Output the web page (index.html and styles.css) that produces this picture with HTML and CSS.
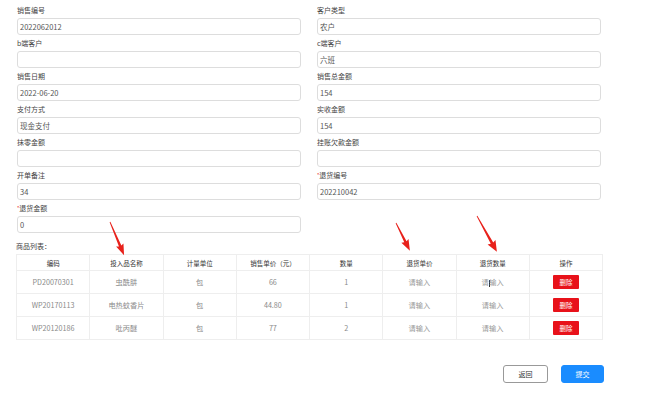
FILE: index.html
```html
<!DOCTYPE html>
<html lang="zh-CN">
<head>
<meta charset="utf-8">
<title>退货</title>
<link rel="stylesheet" href="styles.css">
</head>
<body>
<div class="page">
  <div class="form">
    <div class="field"><div class="label">销售编号</div><div class="input">2022062012</div></div>
    <div class="field"><div class="label">客户类型</div><div class="input">农户</div></div>
    <div class="field"><div class="label">b端客户</div><div class="input"></div></div>
    <div class="field"><div class="label">c端客户</div><div class="input">六班</div></div>
    <div class="field"><div class="label">销售日期</div><div class="input">2022-06-20</div></div>
    <div class="field"><div class="label">销售总金额</div><div class="input">154</div></div>
    <div class="field"><div class="label">支付方式</div><div class="input">现金支付</div></div>
    <div class="field"><div class="label">实收金额</div><div class="input">154</div></div>
    <div class="field"><div class="label">抹零金额</div><div class="input"></div></div>
    <div class="field"><div class="label">挂账欠款金额</div><div class="input"></div></div>
    <div class="field"><div class="label">开单备注</div><div class="input">34</div></div>
    <div class="field"><div class="label"><span class="req">*</span>退货编号</div><div class="input">202210042</div></div>
    <div class="field"><div class="label"><span class="req">*</span>退货金额</div><div class="input">0</div></div>
  </div>

  <div class="caption">商品列表：</div>
  <table class="goods">
    <thead>
      <tr><th>编码</th><th>投入品名称</th><th>计量单位</th><th>销售单价（元）</th><th>数量</th><th>退货单价</th><th>退货数量</th><th>操作</th></tr>
    </thead>
    <tbody>
      <tr><td>PD20070301</td><td>虫酰肼</td><td>包</td><td>66</td><td>1</td><td class="ph">请输入</td><td class="ph">请<span class="caret"></span>输入</td><td><span class="del">删除</span></td></tr>
      <tr><td>WP20170113</td><td>电热蚊香片</td><td>包</td><td>44.80</td><td>1</td><td class="ph">请输入</td><td class="ph">请输入</td><td><span class="del">删除</span></td></tr>
      <tr><td>WP20120186</td><td>吡丙醚</td><td>包</td><td>77</td><td>2</td><td class="ph">请输入</td><td class="ph">请输入</td><td><span class="del">删除</span></td></tr>
    </tbody>
  </table>

  <div class="actions">
    <span class="btn btn-back">返回</span>
    <span class="btn btn-submit">提交</span>
  </div>
</div>

<svg class="arrows" width="660" height="401" viewBox="0 0 660 401" aria-hidden="true">
  <g fill="#e8211b">
    <g transform="translate(110,222) rotate(67)"><polygon points="0,-0.4 26,-1.3 25,-4 36,0 25,4 26,1.3 0,0.4"/></g>
    <g transform="translate(396,223) rotate(63.4)"><polygon points="0,-0.4 21,-1.3 20,-4 31,0 20,4 21,1.3 0,0.4"/></g>
    <g transform="translate(477,216) rotate(61)"><polygon points="0,-0.4 31,-1.4 30,-4.5 41,0 30,4.5 31,1.4 0,0.4"/></g>
  </g>
</svg>
</body>
</html>
```

FILE: styles.css
```css
html, body {
  margin: 0;
  padding: 0;
  background: #ffffff;
}
body {
  font-family: "Noto Sans CJK SC", "Noto Sans", sans-serif;
  color: #333;
  width: 660px;
  height: 401px;
  overflow: hidden;
  position: relative;
}
.page {
  padding: 2px 0 0 16px;
  width: 588px;
}
.form {
  display: grid;
  grid-template-columns: 284px 284px;
  column-gap: 16px;
  padding-left: 1px;
}
.field {
  display: flex;
  flex-direction: column;
}
.label {
  height: 16px;
  line-height: 16px;
  font-size: 7px;
  color: #444;
}
.req {
  color: #e8211b;
  font-size: 5px;
  vertical-align: 1px;
}
.input {
  box-sizing: border-box;
  height: 17px;
  line-height: 15px;
  border: 1px solid #dddddd;
  border-radius: 3px;
  padding-left: 2px;
  font-size: 7.5px;
  color: #555;
}
.caption {
  margin-top: 6px;
  height: 15px;
  line-height: 15px;
  font-size: 7px;
  color: #444;
}
.goods {
  border-collapse: collapse;
  width: 587px;
  table-layout: fixed;
}
.goods th, .goods td {
  border: 1px solid #eeeeee;
  text-align: center;
  padding: 0;
  font-size: 6.5px;
  font-weight: normal;
}
.goods th {
  height: 15px;
  color: #333;
}
.goods td {
  height: 22px;
  color: #8a8a8a;
  font-size: 7.2px;
}
.goods td.ph {
  color: #999;
}
.caret {
  display: inline-block;
  width: 0.6px;
  height: 7px;
  background: #333;
  vertical-align: middle;
}
.goods td .del {
  display: inline-block;
  width: 26px;
  height: 14px;
  line-height: 14px;
  background: #e8121a;
  color: #fff;
  font-size: 6.5px;
  border-radius: 1px;
}
.actions {
  display: flex;
  justify-content: flex-end;
  gap: 13px;
  margin-top: 25px;
  width: 588px;
}
.btn {
  box-sizing: border-box;
  height: 18px;
  line-height: 16px;
  font-size: 7px;
  text-align: center;
  border-radius: 3px;
  border: 1px solid #999;
}
.btn-back {
  width: 45px;
  background: #fff;
  color: #333;
}
.btn-submit {
  width: 43px;
  background: #1a8cff;
  border-color: #1a8cff;
  color: #fff;
}
.arrows {
  position: absolute;
  left: 0;
  top: 0;
  pointer-events: none;
}
```
